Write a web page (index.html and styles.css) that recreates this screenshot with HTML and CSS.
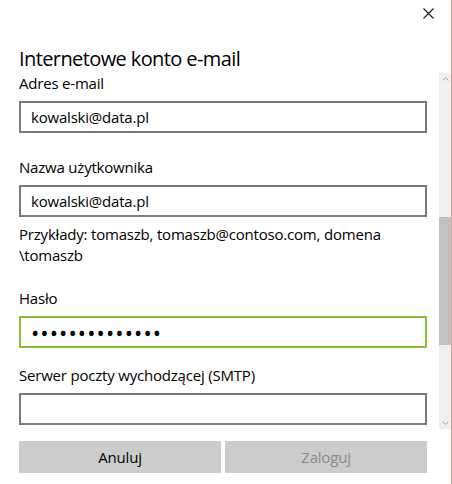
FILE: index.html
```html
<html lang="pl">
    <head>
        <meta charset="UTF-8">
        <title>Internetowe konto e-mail</title>
        <link rel="stylesheet" href="styles.css">
    </head>
    <body>
        <div class="dialog">
            <!--top bar with close button-->
            <div class="topbar">
                <button class="close" aria-label="Zamknij">
                    <svg width="11" height="11" viewBox="0 0 11 11">
                        <path d="M0.5 0.5 L10.5 10.5 M10.5 0.5 L0.5 10.5" stroke="#1a1a1a" stroke-width="1.1" fill="none"/>
                    </svg>
                </button>
            </div>

            <h1 class="title">Internetowe konto e-mail</h1>

            <!--scrolling form area-->
            <div class="body">
                <div class="form">
                    <div class="field field-email">
                        <label class="label">Adres e-mail</label>
                        <input class="input" type="text" value="kowalski@data.pl">
                    </div>

                    <div class="field">
                        <label class="label">Nazwa użytkownika</label>
                        <input class="input" type="text" value="kowalski@data.pl">
                        <p class="hint">Przykłady: tomaszb, tomaszb@contoso.com, domena<br>\tomaszb</p>
                    </div>

                    <div class="field">
                        <label class="label">Hasło</label>
                        <input class="input input-focus password" type="password" value="haslo123456789">
                    </div>

                    <div class="field">
                        <label class="label">Serwer poczty wychodzącej (SMTP)</label>
                        <input class="input" type="text" value="">
                    </div>
                </div>

                <!--scrollbar drawn by hand-->
                <div class="scrollbar">
                    <div class="sb-arrow">
                        <svg width="7" height="4" viewBox="0 0 7 4"><path d="M0.5 3.5 L3.5 0.5 L6.5 3.5" stroke="#a6a6a6" fill="none"/></svg>
                    </div>
                    <div class="sb-track">
                        <div class="sb-thumb"></div>
                    </div>
                    <div class="sb-arrow">
                        <svg width="7" height="4" viewBox="0 0 7 4"><path d="M0.5 0.5 L3.5 3.5 L6.5 0.5" stroke="#a6a6a6" fill="none"/></svg>
                    </div>
                </div>
            </div>

            <!--bottom buttons-->
            <div class="actions">
                <button class="btn">Anuluj</button>
                <button class="btn" disabled>Zaloguj</button>
            </div>
        </div>
    </body>
</html>
```

FILE: styles.css
```css
body {
    margin: 0;
    padding: 0;
    background-color: #fff;
    font-family: 'Open Sans', 'Noto Sans', sans-serif;
    color: #000;
}

.dialog {
    width: 451px;
    height: 484px;
    border-right: 1px solid #d6a585; /*window edge*/
    display: flex;
    flex-direction: column;
}

.topbar {
    height: 45px;
    display: flex;
    justify-content: flex-end;
    align-items: flex-start;
}

.close {
    background: none;
    border: none;
    padding: 0;
    margin: 8px 17px 0 0;
    width: 11px;
    height: 11px;
    display: flex;
    cursor: pointer;
}

.title {
    margin: 0;
    padding-left: 19px;
    font-size: 20px;
    font-weight: 400;
    line-height: 28px;
    letter-spacing: -0.6px;
}

.body {
    height: 356px;
    display: flex;
}

.form {
    flex-grow: 1;
    padding: 0 12px 0 19px;
    overflow: hidden;
}

.field {
    display: flex;
    flex-direction: column;
    margin-bottom: 17px;
}

.field-email {
    margin-bottom: 24px; /*more room under the first field*/
}

.label {
    font-size: 15px;
    line-height: 20px;
    letter-spacing: -0.2px;
    margin-bottom: 8px;
}

.input {
    box-sizing: border-box;
    height: 32px;
    width: 100%;
    border: 2px solid #7a7a7a;
    padding: 0 10px;
    font-family: inherit;
    font-size: 15px;
    letter-spacing: -0.2px;
    color: #000;
    outline: none;
}

.input-focus {
    border-color: #86c232; /*green focus border*/
}

.password {
    font-size: 22px;
    letter-spacing: 1.1px;
}

.hint {
    margin: 7px 0 5px 0;
    font-size: 15px;
    line-height: 21px;
    letter-spacing: -0.2px;
}

.scrollbar {
    width: 12px;
    background-color: #f0f0f0;
    display: flex;
    flex-direction: column;
}

.sb-arrow {
    height: 12px;
    display: flex;
    justify-content: center;
    align-items: center;
}

.sb-track {
    flex-grow: 1;
}

.sb-thumb {
    margin-top: 132px;
    height: 128px;
    background-color: #c1c1c1;
}

.actions {
    display: flex;
    gap: 4px;
    padding: 12px 24px 0 19px;
}

.btn {
    flex: 1;
    height: 32px;
    border: none;
    background-color: #cccccc;
    font-family: inherit;
    font-size: 15px;
    letter-spacing: -0.2px;
    color: #000;
    padding: 0;
}

.btn:disabled {
    color: #8a8a8a;
}
```
